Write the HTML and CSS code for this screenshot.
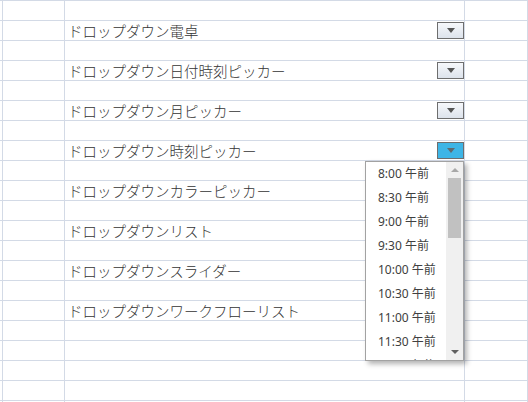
FILE: index.html
```html
<!DOCTYPE html>
<html lang="ja">
<head>
<meta charset="utf-8">
<title>Dropdowns</title>
<link rel="stylesheet" href="styles.css">
</head>
<body>
<div class="sheet">
  <div class="row"><div class="cell"></div><div class="cell"></div><div class="cell"></div><div class="cell"></div></div>
  <div class="row"><div class="cell"></div><div class="cell"></div><div class="cell main"><span class="label">ドロップダウン電卓</span><span class="dd"></span></div><div class="cell"></div></div>
  <div class="row"><div class="cell"></div><div class="cell"></div><div class="cell"></div><div class="cell"></div></div>
  <div class="row"><div class="cell"></div><div class="cell"></div><div class="cell main"><span class="label">ドロップダウン日付時刻ピッカー</span><span class="dd"></span></div><div class="cell"></div></div>
  <div class="row"><div class="cell"></div><div class="cell"></div><div class="cell"></div><div class="cell"></div></div>
  <div class="row"><div class="cell"></div><div class="cell"></div><div class="cell main"><span class="label">ドロップダウン月ピッカー</span><span class="dd"></span></div><div class="cell"></div></div>
  <div class="row"><div class="cell"></div><div class="cell"></div><div class="cell"></div><div class="cell"></div></div>
  <div class="row"><div class="cell"></div><div class="cell"></div><div class="cell main anchor"><span class="label">ドロップダウン時刻ピッカー</span><span class="dd active"></span>
    <div class="popup">
      <ul class="items">
        <li>8:00 午前</li>
        <li>8:30 午前</li>
        <li>9:00 午前</li>
        <li>9:30 午前</li>
        <li>10:00 午前</li>
        <li>10:30 午前</li>
        <li>11:00 午前</li>
        <li>11:30 午前</li>
        <li>12:00 午後</li>
      </ul>
      <div class="scrollbar">
        <div class="sb-btn"><span class="arrow-up"></span></div>
        <div class="sb-track"><div class="sb-thumb"></div></div>
        <div class="sb-btn"><span class="arrow-down"></span></div>
      </div>
    </div>
  </div><div class="cell"></div></div>
  <div class="row"><div class="cell"></div><div class="cell"></div><div class="cell"></div><div class="cell"></div></div>
  <div class="row"><div class="cell"></div><div class="cell"></div><div class="cell main"><span class="label">ドロップダウンカラーピッカー</span></div><div class="cell"></div></div>
  <div class="row"><div class="cell"></div><div class="cell"></div><div class="cell"></div><div class="cell"></div></div>
  <div class="row"><div class="cell"></div><div class="cell"></div><div class="cell main"><span class="label">ドロップダウンリスト</span></div><div class="cell"></div></div>
  <div class="row"><div class="cell"></div><div class="cell"></div><div class="cell"></div><div class="cell"></div></div>
  <div class="row"><div class="cell"></div><div class="cell"></div><div class="cell main"><span class="label">ドロップダウンスライダー</span></div><div class="cell"></div></div>
  <div class="row"><div class="cell"></div><div class="cell"></div><div class="cell"></div><div class="cell"></div></div>
  <div class="row"><div class="cell"></div><div class="cell"></div><div class="cell main"><span class="label">ドロップダウンワークフローリスト</span></div><div class="cell"></div></div>
  <div class="row"><div class="cell"></div><div class="cell"></div><div class="cell"></div><div class="cell"></div></div>
  <div class="row"><div class="cell"></div><div class="cell"></div><div class="cell"></div><div class="cell"></div></div>
  <div class="row"><div class="cell"></div><div class="cell"></div><div class="cell"></div><div class="cell"></div></div>
  <div class="row"><div class="cell"></div><div class="cell"></div><div class="cell"></div><div class="cell"></div></div>
  <div class="row"><div class="cell"></div><div class="cell"></div><div class="cell"></div><div class="cell"></div></div>
</div>
</body>
</html>
```

FILE: styles.css
```css
* { box-sizing: border-box; }
html, body {
  margin: 0;
  padding: 0;
  background: #ffffff;
}
body {
  font-family: "Noto Sans CJK JP", "Noto Sans", sans-serif;
  color: #3c3c3c;
}
.sheet {
  width: 528px;
  height: 402px;
  overflow: hidden;
}
.row {
  display: grid;
  grid-template-columns: 3px 62px 400px 63px;
  height: 20px;
  border-top: 1px solid #d3dae6;
}
.cell {
  border-right: 1px solid #d3dae6;
  height: 19px;
}
.main {
  display: flex;
  align-items: center;
  justify-content: space-between;
  padding-left: 3px;
}
.anchor {
  position: relative;
}
.label {
  font-size: 14.5px;
  line-height: 18px;
  font-weight: 300;
  white-space: nowrap;
  color: #333333;
}
.dd {
  position: relative;
  width: 27px;
  height: 17px;
  border: 1px solid #6e6e6e;
  background: linear-gradient(#f6f8fb, #dde3ec);
}
.dd::after {
  content: "";
  position: absolute;
  left: 9px;
  top: 5px;
  border-left: 4px solid transparent;
  border-right: 4px solid transparent;
  border-top: 5px solid #555;
}
.dd.active {
  background: #3db5e6;
}
.dd.active::after {
  border-top-color: #5f6a70;
}
.popup {
  position: absolute;
  left: 300px;
  top: 20px;
  width: 99px;
  height: 200px;
  background: #ffffff;
  border: 1px solid #a2a2a2;
  box-shadow: 3px 3px 5px rgba(0, 0, 0, 0.3);
  display: flex;
  overflow: hidden;
  z-index: 5;
}
.items {
  list-style: none;
  margin: 0;
  padding: 0 0 0 12px;
  flex: 1;
  overflow: hidden;
  font-family: "Noto Sans", "Noto Sans CJK JP", sans-serif;
}
.items li {
  height: 24px;
  line-height: 24px;
  font-size: 12px;
  color: #404040;
  white-space: nowrap;
}
.scrollbar {
  width: 17px;
  background: #f0f0f0;
  display: flex;
  flex-direction: column;
}
.sb-btn {
  height: 16px;
  display: flex;
  align-items: center;
  justify-content: center;
}
.arrow-up {
  border-left: 4px solid transparent;
  border-right: 4px solid transparent;
  border-bottom: 4px solid #a8a8a8;
}
.arrow-down {
  border-left: 4px solid transparent;
  border-right: 4px solid transparent;
  border-top: 4px solid #606060;
}
.sb-track {
  flex: 1;
  padding: 0 2px;
}
.sb-thumb {
  height: 60px;
  background: #c1c1c1;
}
```
